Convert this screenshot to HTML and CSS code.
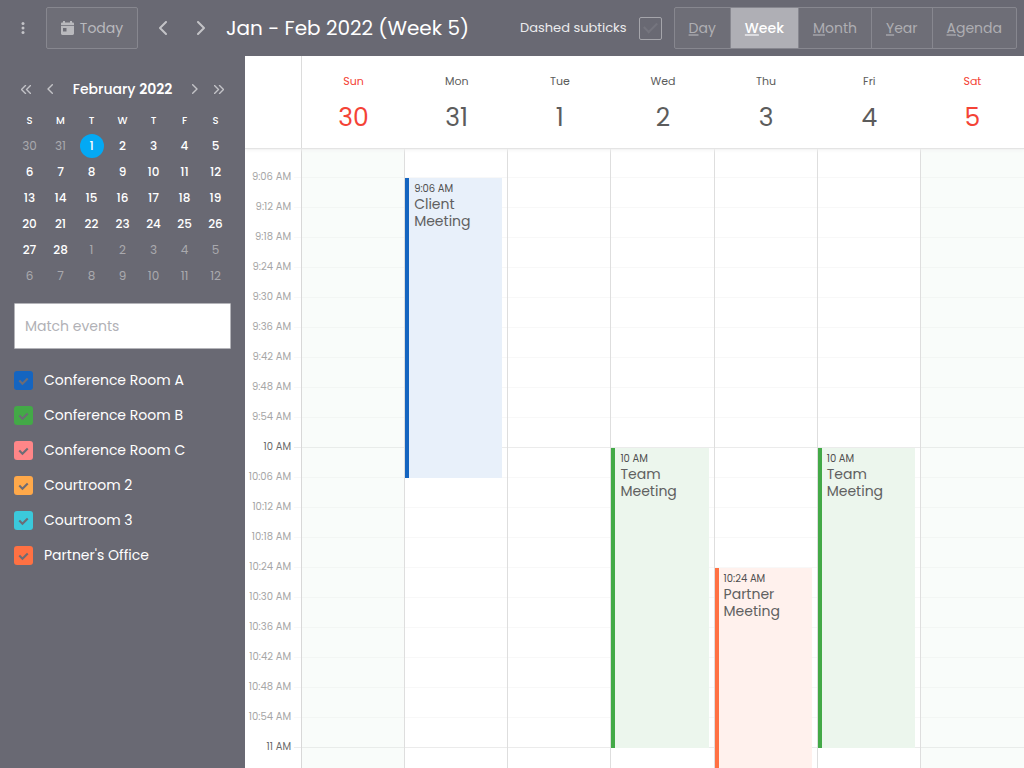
FILE: index.html
```html
<!DOCTYPE html>
<html lang="en">
<head>
<meta charset="utf-8">
<meta name="viewport" content="width=device-width, initial-scale=1">
<title>Calendar</title>
<link rel="stylesheet" href="styles.css">
</head>
<body>
<header class="toolbar">
  <button class="icon-btn menu-btn" aria-label="Menu"><svg width="4" height="12" viewBox="0 0 4 12" fill="currentColor"><circle cx="2" cy="1.500" r="1.500"/><circle cx="2" cy="6" r="1.500"/><circle cx="2" cy="10.500" r="1.500"/></svg></button>
  <button class="today-btn"><svg width="13" height="14" viewBox="0 0 13 14" fill="currentColor"><path fill-rule="evenodd" d="M2 0h2v1.500h5V0h2v1.500h.8c.7 0 1.200.5 1.200 1.200V4H0V2.700c0-.7.5-1.200 1.200-1.200H2zM0 4.800h13v7.800c0 .8-.6 1.400-1.400 1.400H1.400C.6 14 0 13.400 0 12.600zM2 7v3.500h3.500V7z"/></svg>Today</button>
  <button class="icon-btn" aria-label="Previous week"><svg width="8" height="14" viewBox="0 0 8 14"><path class="stroke" d="M7 1 1 7l6 6"/></svg></button>
  <button class="icon-btn" aria-label="Next week"><svg width="8" height="14" viewBox="0 0 8 14"><path class="stroke" d="m1 1 6 6-6 6"/></svg></button>
  <h1 class="title">Jan - Feb 2022 (Week 5)</h1>
  <label class="subticks">Dashed subticks<input type="checkbox" class="subticks-box"></label>
  <nav class="views">
    <button class="view"><u>D</u>ay</button>
    <button class="view view-active"><u>W</u>eek</button>
    <button class="view"><u>M</u>onth</button>
    <button class="view"><u>Y</u>ear</button>
    <button class="view"><u>A</u>genda</button>
  </nav>
</header>
<div class="layout">
  <aside class="sidebar">
    <div class="month-nav">
      <button class="nav-btn" aria-label="Previous year"><svg width="10" height="9" viewBox="0 0 10 9"><path class="stroke thin" d="M4.500.5l-4 4 4 4M9.500.5l-4 4 4 4"/></svg></button>
      <button class="nav-btn" aria-label="Previous month"><svg width="6" height="10" viewBox="0 0 6 10"><path class="stroke thin" d="M5.300.7 1 5l4.300 4.300"/></svg></button>
      <h2 class="month-name">February <b>2022</b></h2>
      <button class="nav-btn" aria-label="Next month"><svg width="6" height="10" viewBox="0 0 6 10"><path class="stroke thin" d="M.7.7 5 5 .7 9.300"/></svg></button>
      <button class="nav-btn" aria-label="Next year"><svg width="10" height="9" viewBox="0 0 10 9"><path class="stroke thin" d="M.5.5l4 4-4 4M5.500.5l4 4-4 4"/></svg></button>
    </div>
    <table class="mini">
      <thead><tr><th>S</th><th>M</th><th>T</th><th>W</th><th>T</th><th>F</th><th>S</th></tr></thead>
      <tbody>
        <tr><td class="other">30</td><td class="other">31</td><td><span class="selected">1</span></td><td>2</td><td>3</td><td>4</td><td>5</td></tr>
        <tr><td>6</td><td>7</td><td>8</td><td>9</td><td>10</td><td>11</td><td>12</td></tr>
        <tr><td>13</td><td>14</td><td>15</td><td>16</td><td>17</td><td>18</td><td>19</td></tr>
        <tr><td>20</td><td>21</td><td>22</td><td>23</td><td>24</td><td>25</td><td>26</td></tr>
        <tr><td>27</td><td>28</td><td class="other">1</td><td class="other">2</td><td class="other">3</td><td class="other">4</td><td class="other">5</td></tr>
        <tr><td class="other">6</td><td class="other">7</td><td class="other">8</td><td class="other">9</td><td class="other">10</td><td class="other">11</td><td class="other">12</td></tr>
      </tbody>
    </table>
    <input class="search" type="text" placeholder="Match events" aria-label="Match events">
    <div class="resources">
      <label class="resource"><span class="tick blue"><input type="checkbox" checked><svg viewBox="0 0 18 18"><path d="m5 9 3 3 5-5"/></svg></span>Conference Room A</label>
      <label class="resource"><span class="tick green"><input type="checkbox" checked><svg viewBox="0 0 18 18"><path d="m5 9 3 3 5-5"/></svg></span>Conference Room B</label>
      <label class="resource"><span class="tick pink"><input type="checkbox" checked><svg viewBox="0 0 18 18"><path d="m5 9 3 3 5-5"/></svg></span>Conference Room C</label>
      <label class="resource"><span class="tick amber"><input type="checkbox" checked><svg viewBox="0 0 18 18"><path d="m5 9 3 3 5-5"/></svg></span>Courtroom 2</label>
      <label class="resource"><span class="tick cyan"><input type="checkbox" checked><svg viewBox="0 0 18 18"><path d="m5 9 3 3 5-5"/></svg></span>Courtroom 3</label>
      <label class="resource"><span class="tick orange"><input type="checkbox" checked><svg viewBox="0 0 18 18"><path d="m5 9 3 3 5-5"/></svg></span>Partner's Office</label>
    </div>
  </aside>
  <main class="week">
    <div class="day-heads">
      <div class="corner"></div>
      <div class="head weekend"><span>Sun</span><strong>30</strong></div>
      <div class="head"><span>Mon</span><strong>31</strong></div>
      <div class="head"><span>Tue</span><strong>1</strong></div>
      <div class="head"><span>Wed</span><strong>2</strong></div>
      <div class="head"><span>Thu</span><strong>3</strong></div>
      <div class="head"><span>Fri</span><strong>4</strong></div>
      <div class="head weekend"><span>Sat</span><strong>5</strong></div>
    </div>
    <div class="grid">
      <div class="hours">
        <span>9:06 AM</span><span>9:12 AM</span><span>9:18 AM</span><span>9:24 AM</span><span>9:30 AM</span><span>9:36 AM</span><span>9:42 AM</span><span>9:48 AM</span><span>9:54 AM</span><span class="hour">10 AM</span>
        <span>10:06 AM</span><span>10:12 AM</span><span>10:18 AM</span><span>10:24 AM</span><span>10:30 AM</span><span>10:36 AM</span><span>10:42 AM</span><span>10:48 AM</span><span>10:54 AM</span><span class="hour">11 AM</span>
      </div>
      <div class="day off"></div>
      <div class="day"><article class="event ev-blue at-906"><time>9:06 AM</time><p>Client Meeting</p></article></div>
      <div class="day"></div>
      <div class="day"><article class="event ev-green at-1000"><time>10 AM</time><p>Team Meeting</p></article></div>
      <div class="day"><article class="event ev-orange at-1024"><time>10:24 AM</time><p>Partner Meeting</p></article></div>
      <div class="day"><article class="event ev-green at-1000"><time>10 AM</time><p>Team Meeting</p></article></div>
      <div class="day off"></div>
    </div>
  </main>
</div>
</body>
</html>
```
FILE: styles.css
```css
* { box-sizing: border-box; }
body {
  margin: 0;
  height: 100vh;
  display: flex;
  flex-direction: column;
  overflow: hidden;
  background: #696973;
  color: #fff;
  font-family: Poppins, Inter, "Open Sans", sans-serif;
  font-size: 14px;
}
button, input { font: inherit; color: inherit; }
button { background: none; border: 0; padding: 0; }
svg { display: block; }
.stroke { fill: none; stroke: currentColor; stroke-width: 2; stroke-linecap: round; stroke-linejoin: round; }
.thin { stroke-width: 1.4; }

.toolbar { flex: none; display: flex; align-items: center; height: 56px; padding: 0 7px 0 4px; }
.icon-btn { display: flex; align-items: center; justify-content: center; width: 38px; height: 42px; color: #c3c3c7; }
.menu-btn { margin-right: 4px; }
.today-btn {
  display: flex; align-items: center; justify-content: center; gap: 6px;
  width: 92px; height: 42px; margin-right: 6px;
  border: 1px solid #87878f; border-radius: 2px;
  background: #6e6e77; color: #b9b9bd;
}
.title { margin: 0 0 0 6px; font-size: 20px; font-weight: 400; white-space: nowrap; }
.subticks { display: flex; align-items: center; gap: 12px; margin-left: auto; margin-right: 12px; font-size: 13px; color: #ebebed; white-space: nowrap; }
.subticks-box {
  appearance: none; width: 23px; height: 23px; margin: 0;
  border: 1px solid #a5a5ab; border-radius: 2px;
  display: grid; place-items: center;
}
.subticks-box::before { content: ""; width: 11px; height: 6px; margin-bottom: 4px; border: solid #75757e; border-width: 0 0 2px 2px; transform: rotate(-45deg); }
.views { display: flex; height: 42px; border: 1px solid #87878f; border-radius: 2px; background: #6e6e77; }
.view { padding: 0 14px; color: #aeaeb3; border-left: 1px solid #87878f; }
.view:first-child { border-left: 0; }
.view-active { background: #afafb5; color: #fff; font-weight: 500; }
.view u { text-decoration-thickness: 2px; text-underline-offset: 1px; text-decoration-color: #96969d; }
.view-active u { text-decoration-color: #dcdce0; }

.layout { flex: 1; min-height: 0; display: flex; }
.sidebar { flex: none; width: 245px; padding: 19px 14px; }
.month-nav { display: flex; align-items: center; height: 28px; }
.nav-btn { display: flex; justify-content: center; width: 24px; color: #c3c3c7; padding: 4px 0; }
.month-name { flex: 1; margin: 0; text-align: center; font-size: 14px; font-weight: 500; white-space: nowrap; }
.month-name b { font-weight: 600; }
.mini { width: 100%; margin-top: 6px; table-layout: fixed; border-collapse: collapse; text-align: center; font-size: 12px; font-weight: 500; }
.mini th { height: 23px; padding: 0; font-size: 10px; font-weight: 500; }
.mini td { height: 26px; padding: 1px 0 0; }
.mini .other { color: #a9a9ae; font-weight: 400; }
.selected { display: block; width: 24px; margin: 0 auto; line-height: 24px; border-radius: 50%; background: #03a9f4; }
.search { display: block; width: 100%; height: 46px; margin: 15px 0 14px; padding: 0 10px; border: 1px solid #b4b4b9; border-radius: 1px; background: #fff; color: #444; }
.search::placeholder { color: #b1b1b6; opacity: 1; }
.resource { display: flex; align-items: center; gap: 11px; height: 35px; }
.tick { display: grid; width: 19px; height: 19px; border-radius: 3px; }
.tick > * { grid-area: 1 / 1; width: 100%; height: 100%; }
.tick input { appearance: none; margin: 0; }
.tick path { fill: none; stroke: #6c6c75; stroke-width: 2; }
.blue { background: #1565c0; }
.green { background: #43a947; }
.pink { background: #ff8688; }
.amber { background: #ffa94a; }
.cyan { background: #3bc9db; }
.orange { background: #ff7143; }

.week { flex: 1; min-width: 0; overflow: hidden; display: flex; flex-direction: column; background: #fff; color: #5c5c5c; }
.day-heads, .grid { display: grid; grid-template-columns: 57px repeat(7, minmax(0, 1fr)); }
.day-heads { flex: none; height: 92px; z-index: 1; background: #fff; box-shadow: 0 1px 1px #e4e4e4, 0 2px 4px #f2f2f2; }
.corner { border-right: 1px solid #dcdcdc; }
.head { display: flex; flex-direction: column; align-items: center; padding-top: 17px; }
.head span { font-size: 11px; line-height: 16px; }
.head strong { margin-top: 12px; font-size: 25px; line-height: 34px; font-weight: 400; }
.weekend { color: #f44336; }
.grid {
  flex: 1; min-height: 0; overflow: hidden;
  background:
    repeating-linear-gradient(transparent 0 299px, #ebebeb 299px 300px) 49px 0 no-repeat,
    repeating-linear-gradient(transparent 0 29px, #f8f8f8 29px 30px) 49px 0 no-repeat;
}
.hours { display: flex; flex-direction: column; padding: 14px 10px 0 0; border-right: 1px solid #d8d8d8; text-align: right; font-size: 10px; color: #a6a6a6; }
.hours span { flex: none; line-height: 30px; white-space: nowrap; }
.hours .hour { color: #6a6a6a; }
.day { position: relative; border-right: 1px solid #dedede; }
.day:last-child { border-right: 0; }
.off { background: rgba(225, 238, 232, 0.2); }
.event { position: absolute; left: 0; right: 5px; height: 300px; padding: 5px; border-left: 4px solid; }
.event time { display: block; color: #4f4f4f; font-size: 10px; line-height: 12px; }
.event p { margin: 1px 0 0; color: #606060; line-height: 17px; }
.at-906 { top: 30px; }
.at-1000 { top: 300px; }
.at-1024 { top: 420px; }
.ev-blue { border-color: #1565c0; background: #e8f0fa; }
.ev-green { border-color: #43a947; background: #ecf6ed; }
.ev-orange { border-color: #ff7143; background: #fff1ed; }
```
